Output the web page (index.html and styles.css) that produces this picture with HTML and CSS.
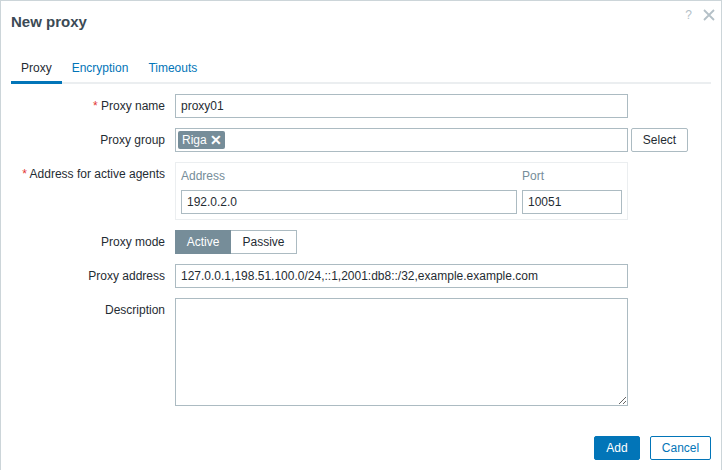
FILE: index.html
```html
<!DOCTYPE html>
<html>
<head>
<meta charset="utf-8">
<link rel="stylesheet" href="styles.css">
</head>
<body>
<div class="dialog">
  <div class="header">
    <h4 class="title">New proxy</h4>
    <div class="header-controls">
      <span class="help">?</span>
      <span class="close">
        <svg width="12" height="12" viewBox="0 0 12 12"><path d="M1 1L11 11M11 1L1 11" stroke="#b4c0c7" stroke-width="1.8" fill="none"/></svg>
      </span>
    </div>
  </div>
  <div class="body">
    <ul class="tabs">
      <li class="tab active">Proxy</li>
      <li class="tab">Encryption</li>
      <li class="tab">Timeouts</li>
    </ul>
    <div class="form">
      <label class="lbl"><span class="req">*</span> Proxy name</label>
      <div class="field"><input class="input w-full" type="text" value="proxy01"></div>

      <label class="lbl">Proxy group</label>
      <div class="field">
        <div class="multiselect w-full">
          <span class="tag">Riga <span class="tag-x">✕</span></span>
        </div>
        <button class="btn-alt select-btn">Select</button>
      </div>

      <label class="lbl"><span class="req">*</span> Address for active agents</label>
      <div class="field">
        <div class="addr-box">
          <div class="addr-col addr-main">
            <div class="addr-head">Address</div>
            <input class="input" type="text" value="192.0.2.0">
          </div>
          <div class="addr-col addr-port">
            <div class="addr-head">Port</div>
            <input class="input" type="text" value="10051">
          </div>
        </div>
      </div>

      <label class="lbl">Proxy mode</label>
      <div class="field">
        <div class="radio-group">
          <span class="radio on">Active</span>
          <span class="radio">Passive</span>
        </div>
      </div>

      <label class="lbl">Proxy address</label>
      <div class="field"><input class="input w-full" type="text" value="127.0.0.1,198.51.100.0/24,::1,2001:db8::/32,example.example.com"></div>

      <label class="lbl">Description</label>
      <div class="field"><textarea class="textarea w-full"></textarea></div>
    </div>
    <div class="footer">
      <button class="btn-primary">Add</button>
      <button class="btn-cancel">Cancel</button>
    </div>
  </div>
</div>
</body>
</html>
```

FILE: styles.css
```css
* { box-sizing: border-box; }
html, body { margin: 0; padding: 0; background: #fff; }
body {
  font-family: "Liberation Sans", Arial, sans-serif;
  font-size: 12px;
  color: #1f2c33;
  overflow: hidden;
}
.dialog {
  width: 722px;
  height: 470px;
  border: 1px solid #ccd5d9;
  border-bottom: none;
  background: #fff;
}
.header {
  display: flex;
  justify-content: space-between;
  align-items: flex-start;
  padding: 0 10px;
  height: 51px;
}
.title {
  margin: 0;
  font-size: 15px;
  font-weight: bold;
  line-height: 42px;
  color: #3b4a55;
}
.header-controls {
  display: flex;
  align-items: center;
  gap: 11px;
  padding-top: 7px;
  margin-right: -4px;
}
.help {
  color: #b4c0c7;
  font-size: 12px;
  line-height: 14px;
}
.close { display: flex; width: 12px; height: 12px; }
.body { padding: 0 10px; }
.tabs {
  list-style: none;
  margin: 0;
  padding: 0;
  display: flex;
  border-bottom: 2px solid #ebeef0;
}
.tab {
  padding: 4px 10px 0;
  line-height: 25px;
  color: #0275b8;
  border-bottom: 3px solid transparent;
  margin-bottom: -2px;
}
.tab.active {
  color: #1f2c33;
  border-bottom-color: #0275b8;
}
.form {
  display: grid;
  grid-template-columns: 154px 1fr;
  column-gap: 10px;
  row-gap: 10px;
  margin-top: 10px;
}
.lbl {
  text-align: right;
  line-height: 24px;
  white-space: nowrap;
}
.req { color: #e33734; }
.field { display: flex; align-items: flex-start; gap: 3px; }
.input {
  height: 24px;
  border: 1px solid #acbbc2;
  padding: 0 5px;
  font-family: inherit;
  font-size: 12px;
  color: #1f2c33;
  background: #fff;
  outline: none;
  margin: 0;
}
.w-full { width: 453px; }
.multiselect {
  height: 24px;
  border: 1px solid #acbbc2;
  padding: 2px;
  display: flex;
  align-items: center;
}
.tag {
  background: #768d99;
  color: #fff;
  border-radius: 2px;
  height: 18px;
  line-height: 18px;
  padding: 0 3px 0 4px;
  display: inline-flex;
  align-items: center;
  gap: 3px;
  font-size: 12px;
}
.tag-x { font-size: 14px; font-weight: bold; line-height: 18px; }
.btn-alt, .btn-primary, .btn-cancel {
  height: 24px;
  font-family: inherit;
  font-size: 12px;
  border-radius: 2px;
  padding: 0 10px;
  margin: 0;
  cursor: pointer;
}
.btn-alt {
  background: #fff;
  border: 1px solid #acbbc2;
  color: #1f2c33;
}
.select-btn { width: 57px; }
.addr-box {
  width: 453px;
  border: 1px solid #ebeef0;
  padding: 5px;
  display: flex;
  gap: 5px;
}
.addr-col { display: flex; flex-direction: column; }
.addr-main .input { width: 336px; }
.addr-port .input { width: 100px; }
.addr-head {
  color: #768d99;
  line-height: 16px;
  height: 16px;
  margin-bottom: 6px;
}
.radio-group { display: flex; }
.radio {
  height: 24px;
  line-height: 22px;
  border: 1px solid #acbbc2;
  padding: 0 10px;
  background: #fff;
}
.radio.on {
  background: #768d99;
  border-color: #768d99;
  color: #fff;
  width: 56px;
  text-align: center;
}
.radio + .radio { border-left: none; width: 66px; text-align: center; }
.textarea {
  height: 108px;
  border: 1px solid #acbbc2;
  margin: 0;
  display: block;
  font-family: inherit;
  font-size: 12px;
  outline: none;
}
.footer {
  display: flex;
  justify-content: flex-end;
  gap: 10px;
  margin-top: 30px;
}
.btn-primary {
  background: #0275b8;
  border: 1px solid #0275b8;
  color: #fff;
  width: 46px;
}
.btn-cancel {
  background: #fff;
  border: 1px solid #0275b8;
  color: #0275b8;
  width: 61px;
}
```
